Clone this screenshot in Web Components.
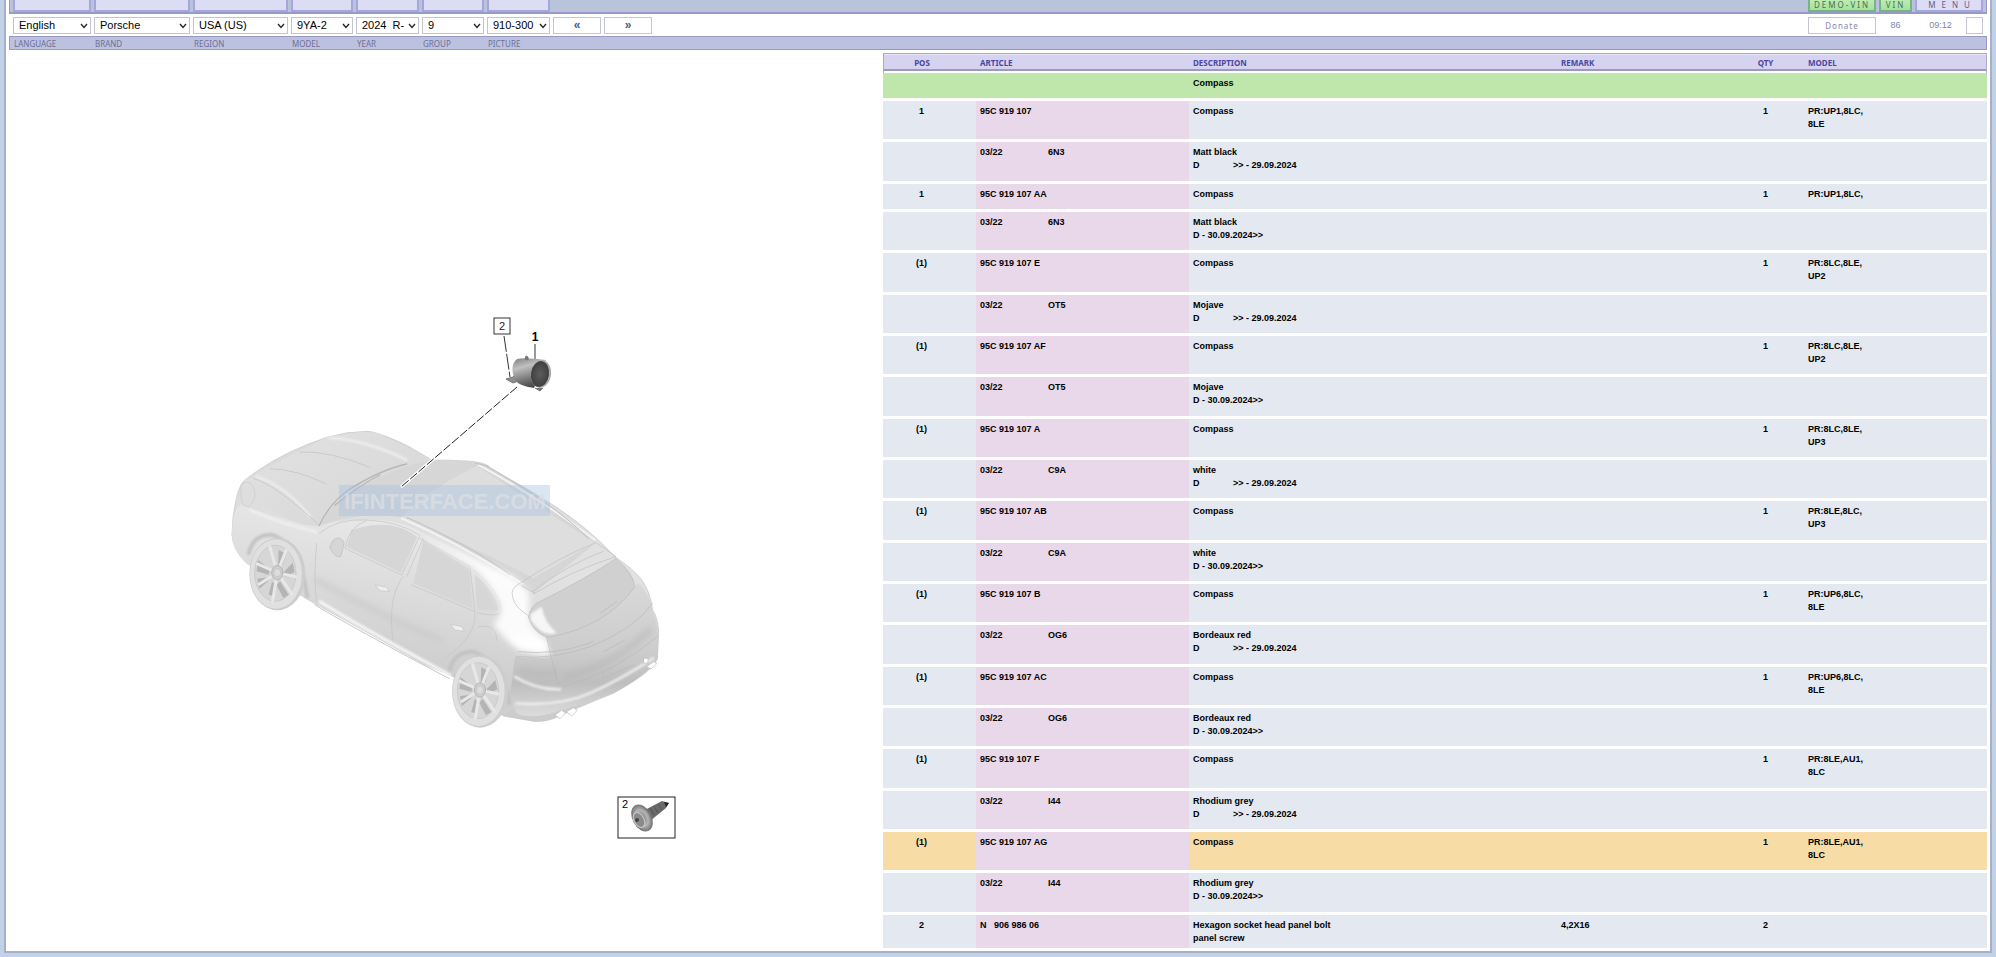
<!DOCTYPE html>
<html lang="en">
<head>
<meta charset="utf-8">
<title>Parts catalogue</title>
<style>
html,body{margin:0;padding:0}
body{background:#c2d2e6;font-family:"Liberation Sans",Arial,sans-serif;color:#000}
</style>
</head>
<body>
<catalog-app>
  <catalog-toolbar slot="toolbar"></catalog-toolbar>
  <parts-diagram slot="diagram"></parts-diagram>
  <parts-table slot="table"></parts-table>
</catalog-app>

<template id="app-tpl">
<style>
:host{display:block;box-sizing:border-box;min-height:100vh;padding:0 4px 4px 4px}
.frame{box-sizing:border-box;min-height:calc(100vh - 4px);background:#fff;border:2px solid #a6afcb;border-top:0;padding:0 3px 3px}
.main{display:grid;grid-template-columns:874fr 1104fr;margin-top:3px}
</style>
<div class="frame">
  <slot name="toolbar"></slot>
  <div class="main"><slot name="diagram"></slot><slot name="table"></slot></div>
</div>
</template>

<template id="toolbar-tpl">
<style>
:host{display:block}
.row{display:grid;grid-template-columns:78px 96px 95px 62px 63px 62px 63px 48px 48px 1fr 68px 33px 68px;column-gap:3px;box-sizing:border-box;padding:0 3px}
.row{border:solid #989ac6;border-width:0 1px}
.tabs{height:14px;background:#bac3dc;border-bottom-width:2px}
.tabs span,.tabs button{display:block;box-sizing:border-box;height:12px;border:2px solid #a5a7da;border-top:0;background:#dcdcf5;margin:0;padding:0}
.tabs button{font:8px/10px "Noto Sans",sans-serif;color:#5c5f88;letter-spacing:2px;text-align:center}
.tabs .go{background:linear-gradient(#bdecb4,#a3e29c);border-color:#78b387;color:#44704f}
.tabs .demo{grid-column:11}
.tabs .menu{letter-spacing:6px;padding-left:6px}
.picks{height:22px;padding:3px 3px 2px;border-color:transparent}
.pick{display:grid}
.pick>*{grid-area:1/1}
select{appearance:none;box-sizing:border-box;width:100%;height:17px;margin:0;padding:0 0 0 5px;border:1px solid #c4c4cc;border-radius:0;background:#fff;font:11px/15px "Liberation Sans",Arial,sans-serif;color:#000}
.pick svg{justify-self:end;align-self:center;width:8px;height:6px;margin-right:3px;pointer-events:none}
.nav,.donate,.square{box-sizing:border-box;height:17px;margin:0;padding:0;border:1px solid #c4c6d2;background:#fff;border-radius:0}
.nav{font:bold 12px/15px "Liberation Sans",Arial,sans-serif;color:#4a5c8e}
.donate{grid-column:11;font:8px/16px "Noto Sans",sans-serif;letter-spacing:1px;color:#8488ab}
.info{font:9px/17px "Liberation Sans",Arial,sans-serif;color:#7c86a8;text-align:center}
.clock{display:grid;grid-template-columns:1fr 17px;}
.square{appearance:none;width:17px}
.labels{height:14px;background:#bcc1e0;border-width:1px}
.labels label{font:8px/13px "Noto Sans",sans-serif;color:#6c6f98;padding-left:1px;white-space:nowrap}
</style>
<div class="row tabs">
  <span></span><span></span><span></span><span></span><span></span><span></span><span></span>
  <button class="go demo">DEMO-VIN</button><button class="go">VIN</button><button class="menu">MENU</button>
</div>
<div class="row picks">
  <div class="pick"><select id="language"><option>English</option></select></div>
  <div class="pick"><select id="brand"><option>Porsche</option></select></div>
  <div class="pick"><select id="region"><option>USA (US)</option></select></div>
  <div class="pick"><select id="model"><option>9YA-2</option></select></div>
  <div class="pick"><select id="year"><option>2024&nbsp; R-</option></select></div>
  <div class="pick"><select id="group"><option>9</option></select></div>
  <div class="pick"><select id="picture"><option>910-300</option></select></div>
  <button class="nav" aria-label="Previous">«</button>
  <button class="nav" aria-label="Next">»</button>
  <button class="donate">Donate</button>
  <span class="info">86</span>
  <div class="clock"><span class="info">09:12</span><input class="square" type="checkbox" aria-label="Night mode"></div>
</div>
<div class="row labels">
  <label for="language">LANGUAGE</label><label for="brand">BRAND</label><label for="region">REGION</label><label for="model">MODEL</label><label for="year">YEAR</label><label for="group">GROUP</label><label for="picture">PICTURE</label>
</div>
</template>

<template id="diagram-tpl">
<style>
:host{display:block}
svg{display:block;width:100%;height:auto}
text{font-family:"Liberation Sans",Arial,sans-serif}
</style>
<svg viewBox="9 53 874 880" role="img" aria-label="Compass, exploded view">
<defs>
<linearGradient id="body" x1="0" y1="0" x2="0" y2="1"><stop offset="0" stop-color="#d9d9d9"/><stop offset=".5" stop-color="#e2e2e2"/><stop offset="1" stop-color="#cbcbcb"/></linearGradient>
<linearGradient id="side" x1="0.6" y1="0" x2="0.3" y2="1"><stop offset="0" stop-color="#ececec"/><stop offset=".45" stop-color="#dadada"/><stop offset=".75" stop-color="#cccccc"/><stop offset="1" stop-color="#d6d6d6"/></linearGradient>
<linearGradient id="hood" x1="0" y1="0" x2="1" y2="1"><stop offset="0" stop-color="#e2e2e2"/><stop offset="1" stop-color="#d6d6d6"/></linearGradient>
<linearGradient id="rear" x1="0" y1="0" x2="0" y2="1"><stop offset="0" stop-color="#d8d8d8"/><stop offset=".5" stop-color="#cdcdcd"/><stop offset=".75" stop-color="#bebebe"/><stop offset="1" stop-color="#dcdcdc"/></linearGradient>
<linearGradient id="can" x1="0" y1="0" x2=".3" y2="1"><stop offset="0" stop-color="#7c7c7c"/><stop offset=".35" stop-color="#c0c0c0"/><stop offset="1" stop-color="#4c4c4c"/></linearGradient>
<radialGradient id="lens"><stop offset="0" stop-color="#5c5c5c"/><stop offset="1" stop-color="#404040"/></radialGradient>
<radialGradient id="head"><stop offset="0" stop-color="#777"/><stop offset=".6" stop-color="#b5b5b5"/><stop offset="1" stop-color="#777"/></radialGradient>
<filter id="soft" x="-20%" y="-20%" width="140%" height="140%"><feGaussianBlur stdDeviation="10"/></filter>
<filter id="edge" x="-10%" y="-10%" width="120%" height="120%"><feGaussianBlur stdDeviation="3"/></filter>
<g id="wheel">
  <ellipse rx="84" ry="109" fill="#cdcdcd"/><ellipse cx="-4" rx="78" ry="104" fill="#e0e0e0"/>
  <ellipse cx="-6" cy="-2" rx="62" ry="84" fill="#d6d6d6" stroke="#c2c2c2" stroke-width="2"/>
  <g fill="#b4b4b4"><path d="M-58-42L-22-14-26 2-62-8zM-60 14L-22 10-28 22-54 44zM-16 24L-8 28-14 66-26 62zM8 22L34 62 18 72-2 34zM20-6L46-34 52-6 24 8zM2-28L4-72 26-60 16-28z"/></g>
  <g stroke="#e8e8e8" stroke-width="9" fill="none"><path d="M0-4L-60-30M0-4L-54 30M0-4L-14 80M0-4L44 60M0-4L54 8M0-4L26-70M0-4L-22-80"/></g>
  <ellipse cy="-4" rx="17" ry="22" fill="#cccccc" stroke="#aaa" stroke-width="2"/><ellipse cy="-4" rx="8" ry="10" fill="#ddd"/>
</g>
</defs>
<g transform="translate(220 410) scale(.3333)" fill="none" stroke-linecap="round" stroke-linejoin="round">
  <path fill="url(#body)" stroke="#c4c4c4" stroke-width="2" d="M36 375Q36 320 48 270Q56 230 72 212L110 184Q200 122 320 82Q380 64 445 64Q480 68 560 106L636 150Q690 150 740 153Q790 156 805 168L815 178Q920 232 1010 292Q1110 358 1185 440Q1240 478 1262 505Q1292 545 1298 600Q1318 630 1316 680L1312 745Q1300 785 1180 850Q1080 890 1000 926Q960 940 930 932L850 918L700 800L610 762L450 672L280 578L80 460Q38 420 36 375z"/>
  <path fill="url(#side)" d="M36 375Q36 300 62 284Q180 330 300 352Q340 330 430 330Q530 325 600 365L860 500L930 545Q925 600 930 630Q960 670 980 682L1000 740L1010 840L900 880L850 918L700 800L610 762L450 672L280 578L80 460Q38 420 36 375z"/>
  <path fill="url(#hood)" d="M72 212Q130 178 320 82Q440 56 480 72L636 150Q540 170 470 200Q380 250 330 290L298 346Q240 355 160 300Q100 240 72 212z"/>
  <path filter="url(#edge)" stroke="#f2f2f2" stroke-width="6" d="M110 200Q200 230 270 320M330 84Q440 90 560 150M90 300Q190 345 290 365"/>
  <path stroke="#cacaca" stroke-width="3" d="M150 176Q230 178 318 222M240 126Q330 122 450 172M100 205Q170 225 296 345"/>
  <path fill="#dedede" stroke="#cacaca" stroke-width="2" d="M64 225Q90 200 104 240Q110 270 86 290Q56 290 64 225z"/>
  <path fill="#d6d6d6" d="M300 346Q330 280 420 235Q520 170 636 150Q740 150 800 165Q960 260 1128 398L940 550L880 510Q720 400 560 325Q430 300 300 346z"/>
  <path fill="#dedede" d="M545 322Q620 240 770 168L1125 398L940 505Q740 400 545 322z"/>
  <path stroke="#b6b6b6" stroke-width="4" d="M298 346Q325 285 385 240Q480 180 560 162M345 285Q420 225 480 195"/>
  <path stroke="#f3f3f3" stroke-width="6" d="M545 325Q720 400 905 520M775 165Q960 265 1125 390"/>
  <path stroke="#c0c0c0" stroke-width="3" d="M560 322Q760 410 870 495M800 168Q1000 280 1105 385M765 160L805 168"/>
  <path fill="#d6d6d6" d="M395 360Q520 320 592 382L542 488L380 410zM610 392L748 475 758 596 580 520zM764 492Q825 540 838 602L772 600z"/>
  <path stroke="#c3c3c3" stroke-width="2" d="M298 370Q350 325 440 330Q540 335 600 376L545 495L375 415Q385 350 440 332M600 385L750 470L765 605L575 525M610 385L560 500M760 480Q830 530 845 600Q840 625 770 608M290 400Q280 500 290 575M550 500Q500 560 520 700M765 610Q770 680 680 740M775 650Q830 640 830 690"/>
  <path filter="url(#soft)" fill="#fff" opacity=".9" d="M600 372L880 500L925 545L930 640L985 700L980 732L900 720Q850 690 820 640Q850 620 840 580Q820 530 760 470z"/>
  <path filter="url(#edge)" stroke="#f8f8f8" stroke-width="9" d="M300 575Q420 650 690 795"/>
  <path stroke="#c6c6c6" stroke-width="3" d="M285 585Q420 665 688 806"/>
  <path filter="url(#soft)" stroke="#c4c4c4" stroke-width="16" opacity=".6" d="M290 510Q450 600 660 690"/>
  <path fill="#eee" stroke="#c6c6c6" stroke-width="2" d="M466 525L500 532 508 545 480 542zM692 643L726 650 733 664 705 660z"/>
  <path fill="#d6d6d6" stroke="#bbb" stroke-width="2" d="M330 412Q335 385 356 384Q378 390 370 410L362 440Q340 442 330 412z"/>
  <path stroke="#bebebe" stroke-width="2" d="M930 620Q880 590 878 560Q870 535 900 520Q1020 440 1128 398L1188 440Q1060 480 940 552M945 550L905 528M1150 424Q1040 465 938 545"/>
  <path fill="url(#rear)" d="M980 682Q1130 650 1255 520Q1300 570 1298 610Q1318 640 1314 745Q1290 790 1180 850L1010 905Q930 930 890 910L870 860L885 740Q930 750 1000 740z"/>
  <path filter="url(#soft)" fill="#fff" opacity=".8" d="M860 670L975 690L990 735L900 715z"/>
  <path fill="#d0d0d0" stroke="#bababa" stroke-width="2" d="M926 622Q930 585 965 572Q1090 510 1188 446Q1240 490 1245 530Q1160 650 985 682Q940 670 926 622z"/>
  <path filter="url(#edge)" fill="#f6f6f6" d="M932 612L965 590Q975 640 1010 668Q970 685 932 630z"/>
  <path stroke="#b8b8b8" stroke-width="2" d="M890 740Q1000 750 1110 710Q1240 660 1298 580M895 725Q1010 738 1120 695M1150 725L1215 690M1140 610L1190 575M1005 770Q1010 830 1030 830Q1180 790 1312 680M1150 790V805L1240 765M980 682Q1000 760 1010 820"/>
  <path filter="url(#edge)" stroke="#f1f1f1" stroke-width="7" d="M885 800Q950 840 1020 838M890 880Q1020 890 1110 850T1300 745"/>
  <path stroke="#b4b4b4" stroke-width="16" opacity=".6" filter="url(#soft)" d="M900 780Q960 800 1000 785M1040 800Q1190 760 1290 660"/>
  <path fill="#fff" stroke="#bbb" stroke-width="2" d="M1005 915l20-14 12 8-16 16zM1040 905l20-12 12 8-16 16zM1280 770l22-16 8 8-16 14zM1272 745h12v14h-12z"/>
  <path filter="url(#edge)" stroke="#c2c2c2" stroke-width="11" d="M86 430Q100 370 160 375Q240 410 262 560M690 780Q700 725 760 725Q850 760 868 880"/>
  <use href="#wheel" x="172" y="492"/>
  <use href="#wheel" x="780" y="844"/>
</g>
<rect x="339" y="485" width="211" height="31" fill="#a6c0e4" opacity=".4"/>
<text x="445" y="509" text-anchor="middle" font-size="22" font-weight="bold" fill="#dfe0e3" opacity=".7">IFINTERFACE.COM</text>
<path d="M517 387L401 487" stroke="#fff" stroke-width="3"/>
<path d="M517 387L401 487" stroke="#222" stroke-dasharray="9 2"/>
<path d="M504 336L510 377M535 344V359" stroke="#333" stroke-dasharray="16 2"/>
<rect x="494" y="318" width="16" height="16" fill="#fff" stroke="#333"/>
<text x="502" y="330" text-anchor="middle" font-size="11" fill="#222">2</text>
<text x="535" y="341" text-anchor="middle" font-size="12" font-weight="bold">1</text>
<g>
  <path d="M506 379l7-2 5-5 3 8-8 3z" fill="#8d8d8d" stroke="#777"/>
  <path d="M517 359Q524 357 546 360L534 388Q519 386 515 380Q509 366 517 359z" fill="url(#can)"/>
  <ellipse cx="541" cy="374" rx="10" ry="14" transform="rotate(8 541 374)" fill="#a9a9a9"/>
  <ellipse cx="540" cy="374" rx="9" ry="13" transform="rotate(8 540 374)" fill="url(#lens)"/>
  <path d="M525 359l1-3 2 1v3zM535 388l5 3 3-3" stroke="#777" fill="#777"/>
</g>
<rect x="618" y="797" width="57" height="41" fill="#fff" stroke="#222"/>
<text x="625" y="808" text-anchor="middle" font-size="11">2</text>
<g>
  <path d="M643 811L662 801 669 803 666 808 650 821z" fill="#6a6a6a"/>
  <path d="M650 808l4 7M654 806l4 7M658 804l4 6" stroke="#555"/>
  <path d="M664 802l5 1-3 4z" fill="#222"/>
  <ellipse cx="642" cy="818" rx="9" ry="14" transform="rotate(-28 642 818)" fill="url(#head)" stroke="#777"/>
  <ellipse cx="639" cy="820" rx="5" ry="8" transform="rotate(-28 639 820)" fill="#8a8a8a" stroke="#ccc"/>
  <circle cx="637" cy="820" r="2" fill="#444"/>
</g>
</svg>
</template>

<template id="table-tpl">
<style>
:host{display:block}
table{width:100%;border-collapse:separate;border-spacing:0;table-layout:fixed;font:bold 9px/13px "Liberation Sans",Arial,sans-serif}
.c1{width:93px}.c2{width:213px}.c4{width:170px}.c5{width:77px}.c6{width:183px}
th{box-sizing:border-box;height:20px;padding:0 4px;text-align:left;font:bold 8px/12px "Noto Sans",sans-serif;color:#4a47a0;background:linear-gradient(#a8a8c8 0 1px,#e9e7f8 1px 2px,#d5d3f0 2px 16px,#9b99c4 16px 18px,#fff 18px)}
th:first-child{border-left:1px solid #a8a8c8}th:last-child{border-right:1px solid #a8a8c8}
td{box-sizing:border-box;height:41px;padding:4px 4px 0;vertical-align:top;background:#e3e8f1;border-bottom:3px solid #fff}
tr:nth-child(3n) td{height:42px}
tr.head td,tr.short td{height:28px}
tr.last td{height:33px;border-bottom:0}
td:nth-child(2){background:#e8d8ea}
tr.head td{background:#bfe7ac}
tr.hot td:not(:nth-child(2)){background:#f7dca6}
td:first-child,th:first-child{text-align:center;padding-right:20px}
td:nth-child(5),th:nth-child(5){text-align:center}
.date{display:inline-block;width:68px}
.from{display:inline-block;width:40px}
</style>
<table>
<colgroup><col class="c1"><col class="c2"><col><col class="c4"><col class="c5"><col class="c6"></colgroup>
<thead><tr><th>POS</th><th>ARTICLE</th><th>DESCRIPTION</th><th>REMARK</th><th>QTY</th><th>MODEL</th></tr></thead>
<tbody></tbody>
</table>
</template>

<script>
function mount(host, id) {
  const root = host.attachShadow({ mode: 'open' });
  root.append(document.getElementById(id).content.cloneNode(true));
  return root;
}

class CatalogApp extends HTMLElement {
  constructor() { super(); mount(this, 'app-tpl'); }
}

class CatalogToolbar extends HTMLElement {
  constructor() {
    super();
    const root = mount(this, 'toolbar-tpl');
    root.querySelectorAll('.pick').forEach(p => p.insertAdjacentHTML('beforeend',
      '<svg viewBox="0 0 8 6" aria-hidden="true"><path d="M1 1l3 3.5L7 1" fill="none" stroke="#222" stroke-width="1.3"/></svg>'));
  }
}

class PartsDiagram extends HTMLElement {
  constructor() { super(); mount(this, 'diagram-tpl'); }
}

const parts = [
  ['1', '', 'PR:UP1,8LC,', '8LE', '6N3', 'Matt black'],
  ['1', ' AA', 'PR:UP1,8LC,', '', '6N3', 'Matt black'],
  ['(1)', ' E', 'PR:8LC,8LE,', 'UP2', 'OT5', 'Mojave'],
  ['(1)', ' AF', 'PR:8LC,8LE,', 'UP2', 'OT5', 'Mojave'],
  ['(1)', ' A', 'PR:8LC,8LE,', 'UP3', 'C9A', 'white'],
  ['(1)', ' AB', 'PR:8LE,8LC,', 'UP3', 'C9A', 'white'],
  ['(1)', ' B', 'PR:UP6,8LC,', '8LE', 'OG6', 'Bordeaux red'],
  ['(1)', ' AC', 'PR:UP6,8LC,', '8LE', 'OG6', 'Bordeaux red'],
  ['(1)', ' F', 'PR:8LE,AU1,', '8LC', 'I44', 'Rhodium grey'],
  ['(1)', ' AG', 'PR:8LE,AU1,', '8LC', 'I44', 'Rhodium grey'],
];

class PartsTable extends HTMLElement {
  constructor() {
    super();
    const body = mount(this, 'table-tpl').querySelector('tbody');
    const row = (cells, cls = '') => `<tr class="${cls}">${cells.map(c => `<td>${c}</td>`).join('')}</tr>`;
    let html = row(['', '', 'Compass', '', '', ''], 'head');
    parts.forEach(([pos, suffix, pr, more, code, colour], i) => {
      const period = i % 2 ? 'D - 30.09.2024&gt;&gt;' : '<span class="from">D</span>&gt;&gt; - 29.09.2024';
      const cls = suffix === ' AG' ? 'hot' : more ? '' : 'short';
      html += row([pos, '95C 919 107' + suffix, 'Compass', '', '1', more ? pr + '<br>' + more : pr], cls);
      html += row(['', `<span class="date">03/22</span>${code}`, `${colour}<br>${period}`, '', '', '']);
    });
    html += row(['2', 'N&nbsp;&nbsp; 906 986 06', 'Hexagon socket head panel bolt<br>panel screw', '4,2X16', '2', ''], 'last');
    body.innerHTML = html;
  }
}

customElements.define('catalog-app', CatalogApp);
customElements.define('catalog-toolbar', CatalogToolbar);
customElements.define('parts-diagram', PartsDiagram);
customElements.define('parts-table', PartsTable);
</script>
</body>
</html>
